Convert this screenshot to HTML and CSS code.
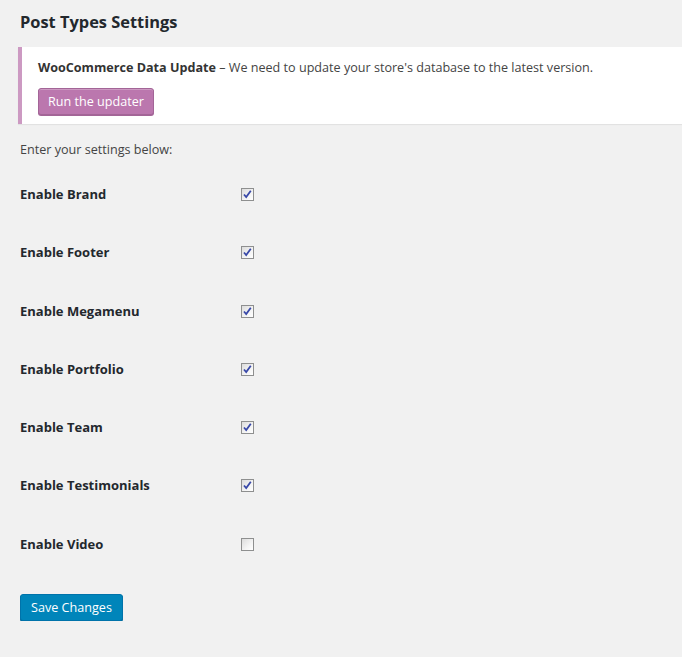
FILE: index.html
```html
<!DOCTYPE html>
<html>
<head>
<meta charset="utf-8">
<link rel="stylesheet" href="styles.css">
</head>
<body>
<div class="wrap">
  <h2 class="title">Post Types Settings</h2>
  <div class="notice">
    <p class="notice-text"><strong>WooCommerce Data Update</strong> – We need to update your store's database to the latest version.</p>
    <p class="notice-actions"><span class="btn btn-wc">Run the updater</span></p>
  </div>
  <p class="intro">Enter your settings below:</p>
  <div class="form-table">
    <div class="row"><div class="th">Enable Brand</div><div class="td"><span class="cb checked"><svg viewBox="0 0 13 13" width="13" height="13"><path d="M3 6.5 L5.2 9 L9.8 2.8" fill="none" stroke="#3848a8" stroke-width="1.8"/></svg></span></div></div>
    <div class="row"><div class="th">Enable Footer</div><div class="td"><span class="cb checked"><svg viewBox="0 0 13 13" width="13" height="13"><path d="M3 6.5 L5.2 9 L9.8 2.8" fill="none" stroke="#3848a8" stroke-width="1.8"/></svg></span></div></div>
    <div class="row"><div class="th">Enable Megamenu</div><div class="td"><span class="cb checked"><svg viewBox="0 0 13 13" width="13" height="13"><path d="M3 6.5 L5.2 9 L9.8 2.8" fill="none" stroke="#3848a8" stroke-width="1.8"/></svg></span></div></div>
    <div class="row"><div class="th">Enable Portfolio</div><div class="td"><span class="cb checked"><svg viewBox="0 0 13 13" width="13" height="13"><path d="M3 6.5 L5.2 9 L9.8 2.8" fill="none" stroke="#3848a8" stroke-width="1.8"/></svg></span></div></div>
    <div class="row"><div class="th">Enable Team</div><div class="td"><span class="cb checked"><svg viewBox="0 0 13 13" width="13" height="13"><path d="M3 6.5 L5.2 9 L9.8 2.8" fill="none" stroke="#3848a8" stroke-width="1.8"/></svg></span></div></div>
    <div class="row"><div class="th">Enable Testimonials</div><div class="td"><span class="cb checked"><svg viewBox="0 0 13 13" width="13" height="13"><path d="M3 6.5 L5.2 9 L9.8 2.8" fill="none" stroke="#3848a8" stroke-width="1.8"/></svg></span></div></div>
    <div class="row"><div class="th">Enable Video</div><div class="td"><span class="cb"></span></div></div>
  </div>
  <p class="submit"><span class="btn btn-primary">Save Changes</span></p>
</div>
</body>
</html>
```
FILE: styles.css
```css
html, body {
  margin: 0;
  padding: 0;
  background: #f1f1f1;
}
body {
  font-family: "Open Sans", "Noto Sans", sans-serif;
  font-size: 12.6px;
  color: #444;
  overflow: hidden;
}
.wrap {
  padding: 0 0 0 20px;
}
.title {
  margin: 0;
  padding: 10px 0 0;
  height: 38px;
  box-sizing: border-box;
  font-size: 16.4px;
  font-weight: 700;
  color: #23282d;
  line-height: 24px;
}
.notice {
  margin: 9px 0 0 -2px;
  background: #fff;
  border-left: 4px solid #cc99c2;
  box-shadow: 0 1px 1px rgba(0,0,0,.06);
  padding: 10px 16px 9px;
  height: 77px;
  box-sizing: border-box;
}
.notice-text {
  margin: 0;
  line-height: 22px;
  color: #444;
}
.notice-text strong {
  color: #333;
  font-weight: 700;
}
.notice-actions {
  margin: 9px 0 0;
}
.btn {
  display: inline-flex;
  align-items: center;
  justify-content: center;
  height: 27px;
  box-sizing: border-box;
  padding: 0 9px;
  border-radius: 3px;
  font-size: 12.6px;
  color: #fff;
  white-space: nowrap;
}
.btn-wc {
  background: #bb77ae;
  border: 1px solid #a36597;
  box-shadow: inset 0 1px 0 rgba(255,255,255,.25), 0 1px 0 #a36597;
}
.intro {
  margin: 16px 0 0;
  line-height: 20px;
  color: #444;
}
.form-table {
  margin-top: 5px;
  display: flex;
  flex-direction: column;
}
.row {
  display: flex;
  align-items: flex-start;
  height: 58.3px;
}
.th {
  width: 221px;
  padding-top: 20px;
  line-height: 18px;
  font-size: 13px;
  font-weight: 700;
  color: #23282d;
}
.td {
  padding-top: 23px;
}
.cb {
  display: block;
  width: 13px;
  height: 13px;
  box-sizing: border-box;
  border: 1px solid #8e8f8f;
  background: linear-gradient(135deg, #dcdcdc 0%, #f4f4f4 60%, #fff 100%);
  position: relative;
}
.cb svg {
  position: absolute;
  left: -1px;
  top: -1px;
}
.submit {
  margin: 21px 0 0;
}
.btn-primary {
  background: #0085ba;
  border: 1px solid #0073aa;
  box-shadow: 0 1px 0 #006799;
  min-width: 103px;
}
```
